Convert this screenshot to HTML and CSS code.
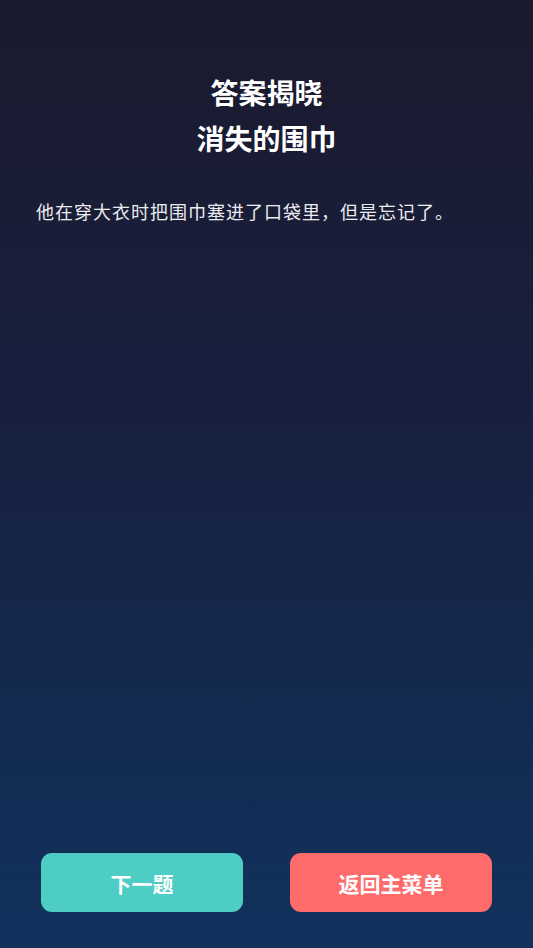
FILE: index.html
```html
<!DOCTYPE html>
<html lang="zh-CN">
<head>
<meta charset="utf-8">
<title>答案揭晓</title>
<link rel="stylesheet" href="styles.css">
</head>
<body>
<div class="screen">
  <main class="content">
    <h1 class="title">答案揭晓</h1>
    <h2 class="title">消失的围巾</h2>
    <p class="answer">他在穿大衣时把围巾塞进了口袋里，但是忘记了。</p>
  </main>
  <div class="actions">
    <button class="btn btn-next">下一题</button>
    <button class="btn btn-menu">返回主菜单</button>
  </div>
</div>
</body>
</html>
```
FILE: styles.css
```css
html, body {
  margin: 0;
  padding: 0;
}
body {
  font-family: "Noto Sans CJK SC", "Noto Sans", sans-serif;
  background: #1b1a2e;
}
.screen {
  width: 533px;
  height: 948px;
  box-sizing: border-box;
  display: flex;
  flex-direction: column;
  background: linear-gradient(180deg, #1b1a2e 0%, #17203f 45%, #10325d 100%);
  color: #ffffff;
}
.content {
  flex: 1;
  padding: 69px 36px 0;
}
.title {
  margin: 0;
  text-align: center;
  font-size: 28px;
  font-weight: 700;
  line-height: 46px;
  color: #ffffff;
}
.answer {
  margin: 36px 0 0;
  font-size: 18px;
  line-height: 28px;
  letter-spacing: 1px;
  color: #ececf0;
}
.actions {
  display: flex;
  gap: 47px;
  padding: 0 41px 36px;
}
.btn {
  flex: 1;
  height: 59px;
  border: none;
  border-radius: 11px;
  font-family: "Noto Sans CJK SC", "Noto Sans", sans-serif;
  font-size: 21px;
  font-weight: 700;
  color: #ffffff;
  padding: 0;
}
.btn-next {
  background: #4ecdc4;
}
.btn-menu {
  background: #ff6b6b;
}
```
